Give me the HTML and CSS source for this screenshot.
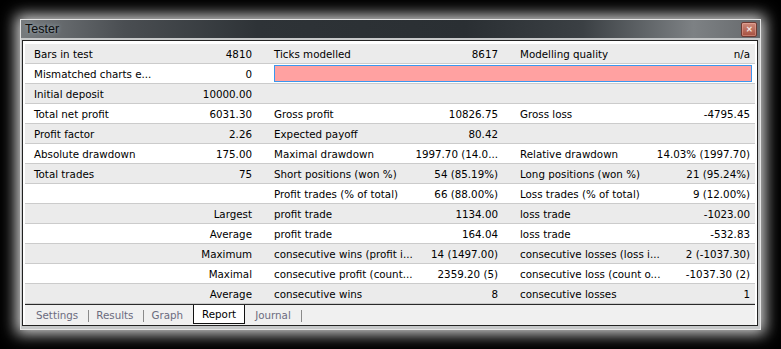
FILE: index.html
```html
<!DOCTYPE html>
<html>
<head>
    <title>Tester</title>
    <meta name="viewport" content="width=device-width, initial-scale=1.0">
    <link rel="stylesheet" href="styles.css">
</head>
<body>
    <!-- 测试器窗口 -->
    <div class="window">
        <div class="titlebar">
            <span class="title">Tester</span>
            <button class="close-btn">&#x2715;</button>
        </div>

        <div class="panel">
            <!-- 报告表格 -->
            <div class="report">
                <div class="row">
                    <div class="group g1"><span>Bars in test</span><span>4810</span></div>
                    <div class="group g2"><span>Ticks modelled</span><span>8617</span></div>
                    <div class="group g3"><span>Modelling quality</span><span>n/a</span></div>
                </div>
                <div class="row">
                    <div class="group g1"><span>Mismatched charts e...</span><span>0</span></div>
                    <div class="quality-bar"></div>
                </div>
                <div class="row">
                    <div class="group g1"><span>Initial deposit</span><span>10000.00</span></div>
                    <div class="group g2"></div>
                    <div class="group g3"></div>
                </div>
                <div class="row">
                    <div class="group g1"><span>Total net profit</span><span>6031.30</span></div>
                    <div class="group g2"><span>Gross profit</span><span>10826.75</span></div>
                    <div class="group g3"><span>Gross loss</span><span>-4795.45</span></div>
                </div>
                <div class="row">
                    <div class="group g1"><span>Profit factor</span><span>2.26</span></div>
                    <div class="group g2"><span>Expected payoff</span><span>80.42</span></div>
                    <div class="group g3"></div>
                </div>
                <div class="row">
                    <div class="group g1"><span>Absolute drawdown</span><span>175.00</span></div>
                    <div class="group g2"><span>Maximal drawdown</span><span>1997.70 (14.0...</span></div>
                    <div class="group g3"><span>Relative drawdown</span><span>14.03% (1997.70)</span></div>
                </div>
                <div class="row">
                    <div class="group g1"><span>Total trades</span><span>75</span></div>
                    <div class="group g2"><span>Short positions (won %)</span><span>54 (85.19%)</span></div>
                    <div class="group g3"><span>Long positions (won %)</span><span>21 (95.24%)</span></div>
                </div>
                <div class="row">
                    <div class="group g1"></div>
                    <div class="group g2"><span>Profit trades (% of total)</span><span>66 (88.00%)</span></div>
                    <div class="group g3"><span>Loss trades (% of total)</span><span>9 (12.00%)</span></div>
                </div>
                <div class="row">
                    <div class="group g1"><span></span><span>Largest</span></div>
                    <div class="group g2"><span>profit trade</span><span>1134.00</span></div>
                    <div class="group g3"><span>loss trade</span><span>-1023.00</span></div>
                </div>
                <div class="row">
                    <div class="group g1"><span></span><span>Average</span></div>
                    <div class="group g2"><span>profit trade</span><span>164.04</span></div>
                    <div class="group g3"><span>loss trade</span><span>-532.83</span></div>
                </div>
                <div class="row">
                    <div class="group g1"><span></span><span>Maximum</span></div>
                    <div class="group g2"><span>consecutive wins (profit i...</span><span>14 (1497.00)</span></div>
                    <div class="group g3"><span>consecutive losses (loss i...</span><span>2 (-1037.30)</span></div>
                </div>
                <div class="row">
                    <div class="group g1"><span></span><span>Maximal</span></div>
                    <div class="group g2"><span>consecutive profit (count...</span><span>2359.20 (5)</span></div>
                    <div class="group g3"><span>consecutive loss (count o...</span><span>-1037.30 (2)</span></div>
                </div>
                <div class="row">
                    <div class="group g1"><span></span><span>Average</span></div>
                    <div class="group g2"><span>consecutive wins</span><span>8</span></div>
                    <div class="group g3"><span>consecutive losses</span><span>1</span></div>
                </div>
            </div>

            <!-- 底部标签 -->
            <div class="tabs">
                <span class="tab">Settings</span><span class="sep"></span>
                <span class="tab">Results</span><span class="sep"></span>
                <span class="tab">Graph</span>
                <span class="tab active">Report</span>
                <span class="tab">Journal</span><span class="sep"></span>
            </div>
        </div>
    </div>
</body>
</html>
```

FILE: styles.css
```css
/* 全局样式 */
body {
    margin: 0;
    padding: 19px 20px;
    background-color: #000;
    font-family: "DejaVu Sans", Verdana, sans-serif;
    font-size: 10.3px;
}

/* 窗口外框 + 白色光晕 */
.window {
    width: 741px;
    height: 311px;
    box-sizing: border-box;
    border: 1px solid #e4e4e4;
    background: #c6c8c9;
    box-shadow: 0 0 14px 4px rgba(235, 235, 235, 0.9);
}

/* 标题栏 */
.titlebar {
    height: 18px;
    display: flex;
    align-items: center;
    justify-content: space-between;
    padding: 0 3px 0 4px;
    background: linear-gradient(to right, #777b7e 0%, #4a4e52 14%, #2e3337 32%, #2a2f33 60%, #3b4044 76%, #7d8184 91%, #66696c 100%);
}
.title {
    font-family: "Liberation Sans", Arial, sans-serif;
    font-size: 12.5px;
    color: #0c0c0c;
    text-shadow: 0 0 4px rgba(190, 220, 240, 0.7);
}
.close-btn {
    width: 16px;
    height: 15px;
    padding: 0;
    border: 1px solid #6e3a32;
    border-radius: 2px;
    background: linear-gradient(#cf8a7b, #a5503f);
    box-shadow: inset 0 0 0 1px rgba(255, 200, 190, 0.35);
    color: #f4e4e0;
    font-size: 8px;
    font-weight: bold;
    line-height: 13px;
    text-align: center;
}

/* 内容面板 */
.panel {
    margin: 2px 2px 3px 1px;
    border: 1px solid #222;
    padding: 3px 2px 0 2px;
    background: #fff;
}

/* 报告行 */
.row {
    display: flex;
    align-items: center;
    gap: 22px;
    height: 20px;
    box-sizing: border-box;
    padding: 1px 5px 0 9px;
    border-bottom: 1px solid #cbcbcb;
    color: #000;
    white-space: nowrap;
}
.row:nth-child(odd) {
    background: #ebebeb;
}
.group {
    display: flex;
    justify-content: space-between;
}
.g1 { width: 218px; }
.g2 { width: 224px; }
.g3 { width: 230px; }

/* 建模质量条 */
.quality-bar {
    width: 478px;
    height: 17px;
    box-sizing: border-box;
    margin: -1px -2px 0 0;
    background: #ffa1a1;
    border: 1px solid #3a97ee;
}

/* 底部标签 */
.tabs {
    display: flex;
    align-items: flex-start;
    height: 21px;
    box-sizing: border-box;
    padding-left: 4px;
    border-top: 1px solid #2a2a2a;
    background: #f0f0f0;
}
.tab {
    padding: 1px 10px 0 7px;
    line-height: 19px;
    color: #6b6b7e;
}
.tab.active {
    padding: 0 8px;
    margin: 0 3px 0 0;
    height: 18px;
    line-height: 18px;
    background: #fff;
    border: 1px solid #111;
    border-top: none;
    color: #000;
}
.sep {
    width: 1px;
    height: 12px;
    margin-top: 5px;
    background: #8a8a8a;
}
```
